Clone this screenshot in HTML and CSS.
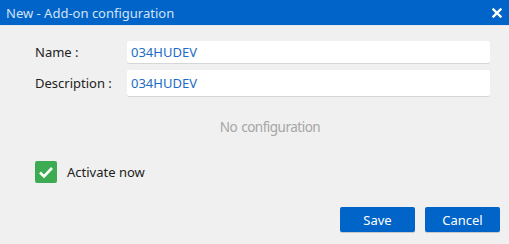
FILE: index.html
```html
<!DOCTYPE html>
<html>
<head>
<meta charset="utf-8">
<link rel="stylesheet" href="styles.css">
</head>
<body>
<div class="dialog">
  <div class="titlebar">
    <span class="title">New - Add-on configuration</span>
    <svg class="close" width="10" height="10" viewBox="0 0 10 10"><path d="M1.5 1.5 L8.5 8.5 M8.5 1.5 L1.5 8.5" stroke="#fff" stroke-width="2.4" stroke-linecap="square"/></svg>
  </div>
  <div class="body">
    <div class="form">
      <label class="label">Name :</label>
      <div class="input name">034HUDEV</div>
      <label class="label">Description :</label>
      <div class="input desc">034HUDEV</div>
    </div>
    <div class="empty">No configuration</div>
    <div class="activate">
      <span class="check"><svg width="22" height="22" viewBox="0 0 22 22"><path d="M5 11.5 L9 15.5 L17 7" fill="none" stroke="#fff" stroke-width="2.6"/></svg></span>
      <span class="check-label">Activate now</span>
    </div>
    <div class="actions">
      <button class="btn">Save</button>
      <button class="btn">Cancel</button>
    </div>
  </div>
</div>
</body>
</html>
```
FILE: styles.css
```css
html, body {
  margin: 0;
  padding: 0;
  background: #f0f0f0;
}
body {
  font-family: "Noto Sans", "Open Sans", sans-serif;
  font-size: 13px;
  color: #222;
}
.dialog {
  width: 509px;
  height: 244px;
  display: flex;
  flex-direction: column;
}
.titlebar {
  height: 26px;
  background: #0064c9;
  display: flex;
  align-items: center;
  justify-content: space-between;
  padding: 0 7px 0 6px;
  box-sizing: border-box;
  border-bottom: 1px solid #e4e8ee;
}
.title {
  color: #d4e3f6;
  font-size: 13px;
}
.close {
  display: block;
}
.body {
  padding: 15px 19px 0 35px;
  display: flex;
  flex-direction: column;
}
.form {
  display: grid;
  grid-template-columns: 92px 1fr;
  row-gap: 7px;
  align-items: center;
}
.label {
  color: #222;
}
.input {
  background: #fff;
  border-radius: 2px;
  box-shadow: 0 1px 0 #d6d6d6;
  color: #1a6cc4;
  padding: 0 4px;
  display: flex;
  align-items: center;
}
.input.name { height: 22px; }
.input.desc { height: 26px; }
.empty {
  text-align: center;
  color: #a6a6a6;
  font-size: 13.5px;
  letter-spacing: -0.5px;
  word-spacing: 1px;
  line-height: 19px;
  margin-top: 22px;
  padding-left: 15px;
}
.activate {
  display: flex;
  align-items: center;
  gap: 10px;
  margin-top: 24px;
}
.check {
  width: 22px;
  height: 22px;
  background: #3dab52;
  border-radius: 2px;
  display: block;
}
.check svg { display: block; }
.actions {
  display: flex;
  justify-content: flex-end;
  gap: 10px;
  margin-top: 24px;
  margin-right: -10px;
}
.btn {
  width: 75px;
  height: 25px;
  background: #0064c9;
  color: #fff;
  border: none;
  border-radius: 2px;
  font-family: "Noto Sans", "Open Sans", sans-serif;
  font-size: 13px;
  padding: 0;
  box-shadow: 0 1px 0 #c8c8c8;
}
```
